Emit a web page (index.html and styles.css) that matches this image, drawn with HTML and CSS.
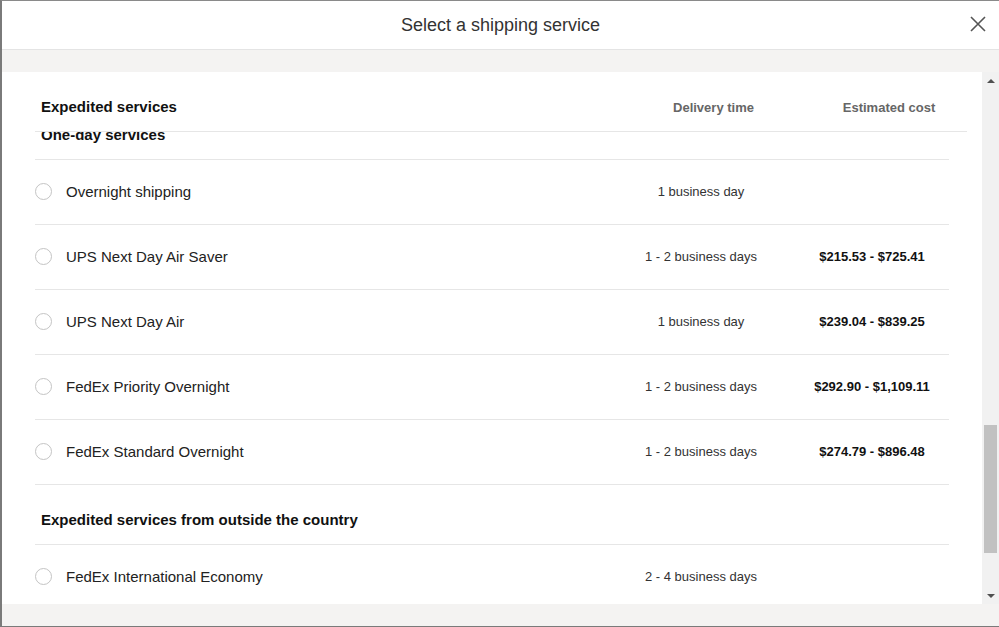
FILE: index.html
```html
<!DOCTYPE html>
<html lang="en">
<head>
<meta charset="utf-8">
<title>Select a shipping service</title>
<link rel="stylesheet" href="styles.css">
</head>
<body>
<div class="window">
  <header class="titlebar">
    <h1 class="title">Select a shipping service</h1>
    <button class="close" aria-label="Close">
      <svg width="16" height="16" viewBox="0 0 16 16"><path d="M1 1L15 15M15 1L1 15" stroke="#555" stroke-width="1.6" fill="none"/></svg>
    </button>
  </header>
  <div class="band"></div>
  <div class="body">
    <div class="scroll">
      <div class="thead">
        <div class="th-name">Expedited services</div>
        <div class="th-col th-time">Delivery time</div>
        <div class="th-col th-cost">Estimated cost</div>
      </div>
      <div class="group-clipped"><span>One-day services</span></div>

      <div class="row">
        <div class="opt"><span class="radio"></span><span class="label">Overnight shipping</span></div>
        <div class="time">1 business day</div>
        <div class="cost"></div>
      </div>
      <div class="row">
        <div class="opt"><span class="radio"></span><span class="label">UPS Next Day Air Saver</span></div>
        <div class="time">1 - 2 business days</div>
        <div class="cost">$215.53 - $725.41</div>
      </div>
      <div class="row">
        <div class="opt"><span class="radio"></span><span class="label">UPS Next Day Air</span></div>
        <div class="time">1 business day</div>
        <div class="cost">$239.04 - $839.25</div>
      </div>
      <div class="row">
        <div class="opt"><span class="radio"></span><span class="label">FedEx Priority Overnight</span></div>
        <div class="time">1 - 2 business days</div>
        <div class="cost">$292.90 - $1,109.11</div>
      </div>
      <div class="row">
        <div class="opt"><span class="radio"></span><span class="label">FedEx Standard Overnight</span></div>
        <div class="time">1 - 2 business days</div>
        <div class="cost">$274.79 - $896.48</div>
      </div>

      <div class="group">Expedited services from outside the country</div>

      <div class="row">
        <div class="opt"><span class="radio"></span><span class="label">FedEx International Economy</span></div>
        <div class="time">2 - 4 business days</div>
        <div class="cost"></div>
      </div>
    </div>
    <div class="scrollbar">
      <div class="sb-btn"><span class="tri-up"></span></div>
      <div class="sb-track"><div class="sb-thumb"></div></div>
      <div class="sb-btn"><span class="tri-down"></span></div>
    </div>
  </div>
  <div class="band"></div>
</div>
</body>
</html>
```

FILE: styles.css
```css
* { box-sizing: border-box; }
html, body { margin: 0; padding: 0; background: #fff; }
body {
  width: 999px;
  height: 627px;
  overflow: hidden;
  font-family: "Liberation Sans", Arial, sans-serif;
}
.window {
  width: 999px;
  height: 627px;
  border-top: 1px solid #8a8a8a;
  border-left: 2px solid #7a7a7a;
  border-bottom: 1px solid #7a7a7a;
  display: flex;
  flex-direction: column;
}
.titlebar {
  height: 49px;
  flex: none;
  border-bottom: 1px solid #e4e4e4;
  display: flex;
  align-items: center;
  justify-content: center;
  position: relative;
}
.title {
  margin: 0;
  font-size: 18px;
  font-weight: normal;
  color: #333;
  line-height: 22px;
}
.close {
  position: absolute;
  right: 13px;
  top: 15px;
  width: 16px;
  height: 16px;
  padding: 0;
  border: 0;
  background: none;
  display: flex;
}
.band {
  height: 22px;
  flex: none;
  background: #f4f3f2;
}
.body {
  height: 532px;
  flex: none;
  display: flex;
  background: #fff;
}
.scroll {
  flex: 1;
  overflow: hidden;
}
.thead {
  display: grid;
  grid-template-columns: 1fr 195px 156px;
  margin: 0 15px 0 33px;
  height: 60px;
  padding-top: 26px;
  border-bottom: 1px solid #e6e6e6;
  line-height: 18px;
}
.th-name {
  padding-left: 6px;
  font-size: 15px;
  font-weight: bold;
  color: #111;
}
.th-col {
  font-size: 13px;
  font-weight: bold;
  color: #666;
  text-align: center;
  padding-top: 1px;
}
.group-clipped {
  height: 28px;
  margin: 0 33px;
  overflow: hidden;
  border-bottom: 1px solid #e6e6e6;
}
.group-clipped span {
  display: block;
  margin-top: -6px;
  padding-left: 6px;
  font-size: 15px;
  font-weight: bold;
  line-height: 18px;
  color: #111;
}
.row {
  display: grid;
  grid-template-columns: 1fr 188px 154px;
  align-items: center;
  height: 65px;
  padding-bottom: 2px;
  margin: 0 33px;
  border-bottom: 1px solid #e6e6e6;
}
.opt {
  display: flex;
  align-items: center;
  gap: 14px;
}
.radio {
  width: 17px;
  height: 17px;
  border-radius: 50%;
  border: 1px solid #c4c4c4;
  flex: none;
}
.label {
  font-size: 15px;
  color: #222;
}
.time {
  font-size: 13px;
  color: #333;
  text-align: center;
}
.cost {
  font-size: 13px;
  font-weight: bold;
  color: #111;
  text-align: center;
}
.group {
  height: 60px;
  margin: 0 33px;
  padding: 26px 0 0 6px;
  line-height: 18px;
  font-size: 15px;
  font-weight: bold;
  color: #111;
  border-bottom: 1px solid #e6e6e6;
}
.scrollbar {
  width: 17px;
  flex: none;
  background: #f1f1f1;
  display: flex;
  flex-direction: column;
}
.sb-btn {
  height: 17px;
  flex: none;
  display: flex;
  align-items: center;
  justify-content: center;
}
.tri-up {
  width: 0; height: 0;
  border-left: 4px solid transparent;
  border-right: 4px solid transparent;
  border-bottom: 4px solid #505050;
}
.tri-down {
  width: 0; height: 0;
  border-left: 4px solid transparent;
  border-right: 4px solid transparent;
  border-top: 4px solid #505050;
}
.sb-track {
  flex: 1;
}
.sb-thumb {
  margin: 336px 2px 0;
  height: 128px;
  background: #c1c1c1;
}
```
